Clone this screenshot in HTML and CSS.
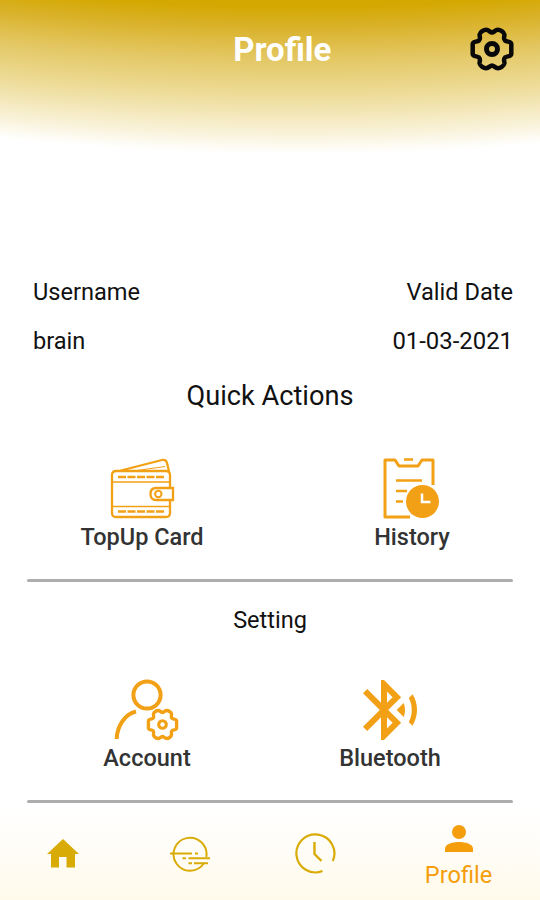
FILE: index.html
```html
<!DOCTYPE html>
<html lang="en">
<head>
  <meta charset="UTF-8" />
  <meta name="viewport" content="width=device-width, initial-scale=1.0"/>
  <title>Profile</title>
  <link rel="stylesheet" href="styles.css">
</head>
<body>

  <!-- Header -->
  <header class="header">
    <h1>Profile</h1>
    <svg class="gear" viewBox="-22 -22 44 44">
      <path id="gear" d="M0 -16.5 C2 -16.5 3 -19.2 6 -19.2 C8 -19.2 12 -17 12.4 -14.5 C12.6 -12 11 -10.5 13 -8.5 C15 -6.8 19 -8 19.3 -5 V5 C19 8 15 6.8 13 8.5 C11 10.5 12.6 12 12.4 14.5 C12 17 8 19.2 6 19.2 C3 19.2 2 16.5 0 16.5 C-2 16.5 -3 19.2 -6 19.2 C-8 19.2 -12 17 -12.4 14.5 C-12.6 12 -11 10.5 -13 8.5 C-15 6.8 -19 8 -19.3 5 V-5 C-19 -8 -15 -6.8 -13 -8.5 C-11 -10.5 -12.6 -12 -12.4 -14.5 C-12 -17 -8 -19.2 -6 -19.2 C-3 -19.2 -2 -16.5 0 -16.5 Z"/>
      <circle r="5.500" stroke-width="5"/>
    </svg>
  </header>

  <!-- User details -->
  <section class="info">
    <div class="info-row">
      <span>Username</span>
      <span>Valid Date</span>
    </div>
    <div class="info-row">
      <span>brain</span>
      <span class="date">01-03-2021</span>
    </div>
  </section>

  <!-- Quick actions -->
  <h2 class="quick-title">Quick Actions</h2>
  <section class="actions quick">
    <a class="action">
      <svg width="66" height="64" viewBox="0 0 66 64" fill="none" stroke="#f2a015" stroke-width="2.3">
        <path d="M12 13.500 L53 3 Q57 2 58 6 L60 14"/>
        <path d="M28 13.500 L56 9.500" stroke-width="1"/>
        <path d="M61 32 V18 Q61 14 57 14 H7 Q3 14 3 18 V56 Q3 60 7 60 H57 Q61 60 61 56 V42"/>
        <path d="M3 25 H61 M3 49.500 H61" stroke-width="1.500"/>
        <path d="M9 20 H55 M9 54.500 H55" stroke-dasharray="8 1.500"/>
        <path d="M64 31 H47 Q41.500 31 41.500 37 Q41.500 43 47 43 H64 Z"/>
        <circle cx="49.300" cy="37" r="3.200" stroke-width="2"/>
      </svg>
      <span>TopUp Card</span>
    </a>
    <a class="action">
      <svg class="history-icon" width="58" height="64" viewBox="0 0 58 64" fill="none" stroke="#f2a015" stroke-width="3">
        <path d="M28 60 H3 V3 H13 L17 9 H36 L40 3 H51 V28" stroke-linejoin="round"/>
        <path d="M22 2.500 H31" stroke-width="2.500"/>
        <path d="M14 23.500 H40 M14 34 H25 M14 44.500 H21" stroke-width="2.500"/>
        <circle cx="40.500" cy="44.500" r="16.500" fill="#f2a015" stroke="none"/>
        <path d="M40 36.500 V45 H48.500" stroke="#fff" stroke-width="2.500"/>
      </svg>
      <span>History</span>
    </a>
  </section>
  <hr>

  <!-- Settings -->
  <h2 class="setting-title">Setting</h2>
  <section class="actions setting">
    <a class="action">
      <svg width="66" height="64" viewBox="0 0 66 64" fill="none" stroke="#f2a015" stroke-width="4">
        <circle cx="33" cy="17" r="13.600"/>
        <path d="M2.700 61 C3 48 11 36 22 33.500"/>
        <g transform="translate(48.500 46.500) scale(.73)">
          <use href="#gear" stroke-width="4.600"/>
          <circle r="5.200" stroke-width="4.300"/>
        </g>
      </svg>
      <span>Account</span>
    </a>
    <a class="action">
      <svg width="56" height="64" viewBox="0 0 56 64" fill="#f2a015">
        <g transform="translate(-8 -4) scale(3)">
          <path d="M15.710 7.710 L10 2 H9 V9.590 L4.410 5 L3 6.410 L8.590 12 L3 17.590 L4.410 19 L9 14.410 V22 H10 L15.710 16.290 L11.410 12 Z M11 5.830 L12.880 7.710 L11 9.590 Z M12.880 16.290 L11 18.170 V14.410 Z"/>
          <path d="M14.240 12.010 L16.560 14.330 C16.840 13.610 17 12.820 17 12 C17 11.180 16.840 10.410 16.570 9.690 Z"/>
          <path d="M19.530 6.710 L18.270 7.970 C18.900 9.180 19.250 10.540 19.250 11.990 S18.890 14.810 18.270 16.010 L19.470 17.210 C20.440 15.670 21.010 13.850 21.010 11.900 C21 10.010 20.460 8.230 19.530 6.710 Z"/>
        </g>
      </svg>
      <span>Bluetooth</span>
    </a>
  </section>
  <hr>

  <!-- Bottom navigation -->
  <nav class="navbar">
    <a>
      <svg width="32" height="29" viewBox="0 0 32 29" fill="#d9ab07">
        <path d="M16 0 L32 15 H28 V28.500 H19.500 V18 H12 V28.500 H4 V15 H0 Z"/>
      </svg>
    </a>
    <a>
      <svg width="40" height="36" viewBox="0 0 40 36" fill="none" stroke="#d9ab07" stroke-width="2">
        <path d="M36.300 21 A16.500 16.500 0 1 0 34 27"/>
        <path d="M0 17.500 H22 M25 17.500 H28 M12.500 22.300 H16 M18.500 22.300 H40 M18.500 27.300 H22 M24 27.300 H38"/>
      </svg>
    </a>
    <a>
      <svg class="clock-icon" width="42" height="42" viewBox="0 0 42 42" fill="none" stroke="#d9ab07" stroke-width="2.200">
        <path d="M28.500 38 A19 19 0 1 1 38.800 28"/>
        <path d="M20.500 9 V21 L27.500 28" stroke-width="2.400"/>
      </svg>
    </a>
    <a class="active">
      <svg width="28" height="28" viewBox="0 0 28 28" fill="#f59e0b">
        <circle cx="14" cy="7" r="7"/>
        <path d="M0 27 V23.500 C0 19 8 17 14 17 S28 19 28 23.500 V27 Z"/>
      </svg>
      <span>Profile</span>
    </a>
  </nav>

</body>
</html>
```
FILE: styles.css
```css
/* Page: white with a curved gold fade at the top */
body {
  font-family: Roboto, 'Liberation Sans', sans-serif;
  margin: 0;
  height: 900px;
  overflow: hidden;
  display: flex;
  flex-direction: column;
  color: #111;
  background: #fff radial-gradient(circle at 300px -2650px,
    #d4a800 2656px, #d9b127 2676px, #e4c866 2710px,
    #eddb96 2744px, #f8f0d3 2780px, #fff 2804px) no-repeat;
}

/* Header with title and gear */
.header {
  height: 98px;
  display: grid;
  grid-template-columns: 469.500px 44px;
  align-items: center;
}

.header h1 {
  margin: 2px 0 0 95px;
  text-align: center;
  font-size: 33px;
  line-height: 40px;
  color: #fff;
}

.gear {
  width: 44px;
  height: 44px;
  fill: none;
  stroke: #080808;
  stroke-width: 4.5;
}

/* User details */
.info {
  padding: 170px 27px 0 33px;
  font-size: 23.6px;
}

.info-row {
  display: flex;
  justify-content: space-between;
  height: 49px;
  line-height: 49px;
}

.date {
  font-size: 23.900px;
}

/* Section titles */
h2 {
  margin: 0;
  text-align: center;
  font-weight: 400;
}

.quick-title {
  font-size: 27.2px;
  line-height: 32px;
  padding-top: 14px;
}

.setting-title {
  font-size: 23.5px;
  line-height: 30px;
  padding-top: 23px;
}

/* Icon buttons */
.actions {
  display: grid;
}

.quick {
  grid-template-columns: 284px 256px;
  padding-top: 45px;
  height: 122px;
}

.setting {
  grid-template-columns: 294px 192px;
  padding-top: 43px;
  height: 122px;
}

.action {
  display: flex;
  flex-direction: column;
  align-items: center;
  font-size: 23.5px;
  font-weight: 500;
  line-height: 33px;
  color: #333;
}

.history-icon {
  margin-right: 2px;
}

hr {
  flex: none;
  width: 486px;
  height: 3px;
  margin: 0 0 0 27px;
  border: none;
  border-radius: 2px;
  background: #adadad;
}

/* Bottom navigation */
.navbar {
  flex: 1;
  display: grid;
  grid-template-columns: 126px 128px 123px 163px;
  align-items: center;
  padding-top: 4px;
  background: linear-gradient(#fff, #fffdf8 45%, #fffaea);
}

.navbar a {
  display: flex;
  flex-direction: column;
  align-items: center;
}

.clock-icon {
  margin-right: 2px;
}

.navbar .active {
  gap: 8px;
  padding-top: 7px;
  font-size: 23.6px;
  line-height: 28px;
  color: #f59e0b;
}
```
